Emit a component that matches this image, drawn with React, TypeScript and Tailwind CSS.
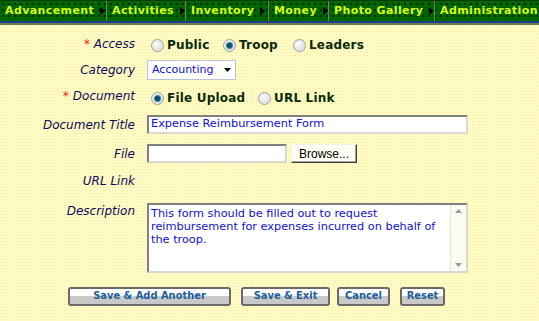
import React from "react";

const navItems = [
  { t: "Advancement", w: "w-[107px]", arrow: true },
  { t: "Activities", w: "w-[79px]", arrow: true },
  { t: "Inventory", w: "w-[83px]", arrow: true },
  { t: "Money", w: "w-[60px]", arrow: true },
  { t: "Photo Gallery", w: "w-[106px]", arrow: true },
  { t: "Administration", w: "flex-1", arrow: false },
];

function Radio({ checked }: { checked?: boolean }) {
  return (
    <span className="inline-flex h-[13px] w-[13px] shrink-0 items-center justify-center rounded-full border border-[#a0a0a0] bg-[radial-gradient(circle_at_35%_35%,#ffffff,#d0d0d0)] shadow-[inset_0_0_0_1px_#e8e8e8]">
      {checked && <span className="h-[5px] w-[5px] rounded-full bg-[#0b4f6b] shadow-[0_0_0_1px_#3a8aa8]" />}
    </span>
  );
}

function RadioOpt({ label, checked, w }: { label: string; checked?: boolean; w: string }) {
  return (
    <div className={`flex items-center gap-[3px] whitespace-nowrap ${w}`}>
      <Radio checked={checked} />
      <span className="text-[12px] font-bold tracking-[0.2px] text-[#0a2a0a]">{label}</span>
    </div>
  );
}

function Label({ text, req }: { text: string; req?: boolean }) {
  return (
    <div className="whitespace-nowrap pr-[12px] text-right text-[12px] italic text-[#0c0c5a]">
      {req && <span className="mr-[4px] not-italic text-[#ff2020]">*</span>}
      {text}
    </div>
  );
}

function Btn({ text, w }: { text: string; w: string }) {
  return (
    <div
      className={`flex h-[19px] items-center justify-center rounded-[3px] border-2 border-[#6a6a6a] bg-[linear-gradient(#ffffff_0,#ffffff_45%,#c9c9c9_45%,#c9c9c9_100%)] text-[11px] font-bold text-[#1d5e9a] ${w}`}
      style={{ fontFamily: '"DejaVu Sans Condensed", "DejaVu Sans", sans-serif' }}
    >
      {text}
    </div>
  );
}

export default function App() {
  return (
    <div
      className="h-[321px] w-[539px] overflow-hidden bg-[#fffbc2] bg-[radial-gradient(circle,#f3eca8_0.7px,transparent_0.9px)] bg-size-[3px_3px]"
      style={{ fontFamily: '"DejaVu Sans", Verdana, sans-serif' }}
    >
      {/* nav */}
      <div className="border-t border-[#0b3a0b]">
        <div className="flex h-[20px] bg-[#006400] bg-[radial-gradient(circle,#0b2a0b_0.7px,transparent_0.9px)] bg-size-[6px_6px]">
          {navItems.map((n, i) => (
            <div
              key={i}
              className={`flex items-center whitespace-nowrap pl-[5px] ${n.w} ${i < navItems.length - 1 ? "border-r border-[#7a7a7a]" : ""}`}
            >
              <span className="text-[11px] font-bold tracking-[0.4px] text-[#d4ff10]">{n.t}</span>
              {n.arrow && (
                <svg className="ml-[6px]" width="5" height="8" viewBox="0 0 5 8">
                  <path d="M0 0 L5 4 L0 8 Z" fill="#000" />
                </svg>
              )}
            </div>
          ))}
        </div>
        <div className="h-[2px] bg-[#1c3f8c]" />
        <div className="h-[2px] bg-[#6f7b53]" />
      </div>

      {/* form */}
      <div className="grid grid-cols-[147px_1fr] pt-[9px]">
        {/* Access */}
        <div className="h-[26px] pt-[1px]">
          <Label text="Access" req />
        </div>
        <div className="flex h-[26px] items-start pt-[2px] pl-[4px]">
          <RadioOpt label="Public" w="w-[72px]" />
          <RadioOpt label="Troop" checked w="w-[70px]" />
          <RadioOpt label="Leaders" w="w-[90px]" />
        </div>

        {/* Category */}
        <div className="h-[26px] pt-[1px]">
          <Label text="Category" />
        </div>
        <div className="h-[26px]">
          <div className="flex h-[20px] w-[89px] items-center justify-between border border-[#b8c4d8] bg-white pl-[4px] pr-[4px]">
            <span className="text-[11px] text-[#1010d0]">Accounting</span>
            <svg width="7" height="4" viewBox="0 0 7 4">
              <path d="M0 0 L7 0 L3.5 4 Z" fill="#000" />
            </svg>
          </div>
        </div>

        {/* Document */}
        <div className="h-[28px] pt-[1px]">
          <Label text="Document" req />
        </div>
        <div className="flex h-[28px] items-start pt-[3px] pl-[4px]">
          <RadioOpt label="File Upload" checked w="w-[107px]" />
          <RadioOpt label="URL Link" w="w-[90px]" />
        </div>

        {/* Document Title */}
        <div className="h-[28px] pt-[2px]">
          <Label text="Document Title" />
        </div>
        <div className="h-[28px] pt-[1px]">
          <div className="flex h-[19px] w-[321px] items-center border-2 border-t-[#808080] border-l-[#808080] border-b-[#d8d8d0] border-r-[#d8d8d0] bg-white pl-[2px] text-[11.3px] text-[#1010d0]">
            Expense Reimbursement Form
          </div>
        </div>

        {/* File */}
        <div className="h-[28px] pt-[3px]">
          <Label text="File" />
        </div>
        <div className="flex h-[28px] items-start gap-[4px] pt-[2px]">
          <div className="h-[19px] w-[140px] border-2 border-t-[#808080] border-l-[#808080] border-b-[#d8d8d0] border-r-[#d8d8d0] bg-white" />
          <div
            className="flex h-[19px] w-[66px] items-center justify-center border border-t-[#f0f0f0] border-l-[#f0f0f0] border-b-[#404040] border-r-[#404040] bg-[#fffff4] text-[12px] text-black shadow-[inset_-1px_-1px_0_#a0a0a0]"
            style={{ fontFamily: '"Liberation Sans", Arial, sans-serif' }}
          >
            Browse...
          </div>
        </div>

        {/* URL Link */}
        <div className="h-[30px] pt-[2px]">
          <Label text="URL Link" />
        </div>
        <div className="h-[30px]" />

        {/* Description */}
        <div className="h-[86px] pt-[2px]">
          <Label text="Description" />
        </div>
        <div className="h-[86px] pt-[3px]">
          <div className="flex h-[70px] w-[321px] border-2 border-t-[#808080] border-l-[#808080] border-b-[#d8d8d0] border-r-[#d8d8d0] bg-white">
            <div className="flex-1 pl-[2px] pt-[2px] text-[11.3px] leading-[13px] text-[#1010d0]">
              This form should be filled out to request reimbursement for expenses incurred on behalf of the troop.
            </div>
            <div className="flex w-[16px] flex-col items-center justify-between border-l border-[#e4e4dc] bg-[#fbfbf2] py-[4px]">
              <svg width="7" height="4" viewBox="0 0 7 4">
                <path d="M0 4 L7 4 L3.5 0 Z" fill="#9a9a9a" />
              </svg>
              <svg width="7" height="4" viewBox="0 0 7 4">
                <path d="M0 0 L7 0 L3.5 4 Z" fill="#9a9a9a" />
              </svg>
            </div>
          </div>
        </div>
      </div>

      {/* buttons */}
      <div className="flex pl-[68px] pt-[1px]">
        <Btn text="Save & Add Another" w="w-[163px]" />
        <div className="w-[10px]" />
        <Btn text="Save & Exit" w="w-[89px]" />
        <div className="w-[7px]" />
        <Btn text="Cancel" w="w-[53px]" />
        <div className="w-[10px]" />
        <Btn text="Reset" w="w-[45px]" />
      </div>
    </div>
  );
}
